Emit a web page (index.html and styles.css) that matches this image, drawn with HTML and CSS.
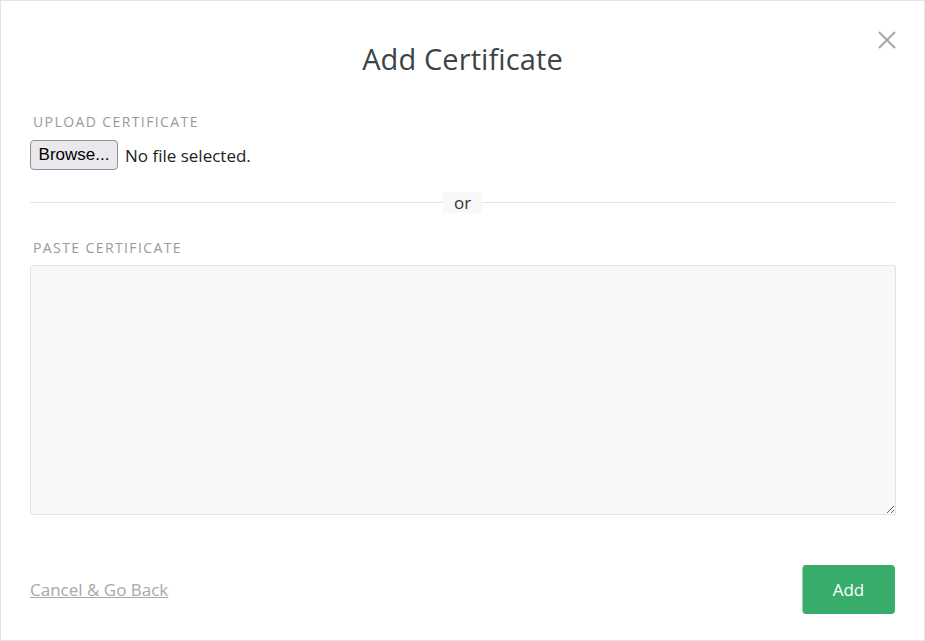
FILE: index.html
```html
<!DOCTYPE html>
<html>
<head>
<meta charset="utf-8">
<link rel="stylesheet" href="styles.css">
</head>
<body>
<div class="modal">
  <div class="header">
    <h1 class="title">Add Certificate</h1>
    <button class="close" aria-label="Close">
      <svg width="18" height="18" viewBox="0 0 18 18"><path d="M1 1 L17 17 M17 1 L1 17" stroke="#a6a6a6" stroke-width="2" fill="none"/></svg>
    </button>
  </div>
  <div class="section upload">
    <div class="label">UPLOAD CERTIFICATE</div>
    <div class="file-row">
      <span class="browse">Browse...</span>
      <span class="nofile">No file selected.</span>
    </div>
  </div>
  <div class="divider"><span class="or">or</span></div>
  <div class="section paste">
    <div class="label">PASTE CERTIFICATE</div>
    <textarea class="cert"></textarea>
  </div>
  <div class="footer">
    <a class="cancel" href="#">Cancel &amp; Go Back</a>
    <button class="add">Add</button>
  </div>
</div>
</body>
</html>
```

FILE: styles.css
```css
html, body {
  margin: 0;
  padding: 0;
  background: #ffffff;
}
body {
  font-family: "Open Sans", "Noto Sans", sans-serif;
}
.modal {
  box-sizing: border-box;
  width: 925px;
  height: 641px;
  border: 1px solid #e3e3e3;
  padding: 0 29px;
  display: flex;
  flex-direction: column;
}
.header {
  position: relative;
  height: 101px;
  display: flex;
  justify-content: center;
}
.title {
  margin: 39px 0 0;
  font-size: 29px;
  font-weight: 400;
  color: #3c4447;
  line-height: 38px;
  letter-spacing: 0.1px;
}
.close {
  position: absolute;
  right: -1px;
  top: 30px;
  border: 0;
  background: none;
  padding: 0;
  width: 18px;
  height: 18px;
}
.label {
  font-size: 14px;
  letter-spacing: 1.4px;
  color: #9a9a9a;
  padding-left: 3px;
  line-height: 20px;
  margin-top: 10px;
}
.file-row {
  display: flex;
  align-items: center;
  margin-top: 8px;
  gap: 7px;
}
.browse {
  box-sizing: border-box;
  width: 88px;
  height: 30px;
  padding: 0 6px;
  display: flex;
  align-items: center;
  justify-content: center;
  background: #e9e9ed;
  border: 1px solid #8f8f9d;
  border-radius: 4px;
  font-size: 17px;
  color: #000;
  font-family: "Liberation Sans", "Noto Sans", sans-serif;
}
.nofile {
  font-size: 17px;
  color: #222;
}
.divider {
  position: relative;
  margin-top: 22px;
  height: 21px;
  display: flex;
  justify-content: center;
  align-items: center;
}
.divider::before {
  content: "";
  position: absolute;
  left: 0;
  right: 0;
  top: 10px;
  border-top: 1px solid #e3e3e3;
}
.or {
  position: relative;
  background: #f7f8fa;
  padding: 0 11px;
  font-size: 17px;
  line-height: 21px;
  color: #333;
}
.paste .label {
  margin-top: 25px;
}
.cert {
  display: block;
  box-sizing: border-box;
  width: 866px;
  height: 250px;
  margin-top: 7px;
  background: #f7f8fa;
  border: 1px solid #e3e3e3;
  border-radius: 2px;
  resize: vertical;
}
.footer {
  margin-top: 50px;
  display: flex;
  justify-content: space-between;
  align-items: center;
}
.cancel {
  font-size: 17px;
  color: #a8a8a8;
  text-decoration: underline;
  margin-top: -1px;
}
.add {
  box-sizing: border-box;
  width: 93px;
  height: 49px;
  background: #38ad6b;
  border: 1px solid #38ad6b;
  border-left-color: #8fd0aa;
  border-radius: 4px;
  color: #fff;
  font-size: 17px;
  font-family: "Open Sans", "Noto Sans", sans-serif;
}
```
